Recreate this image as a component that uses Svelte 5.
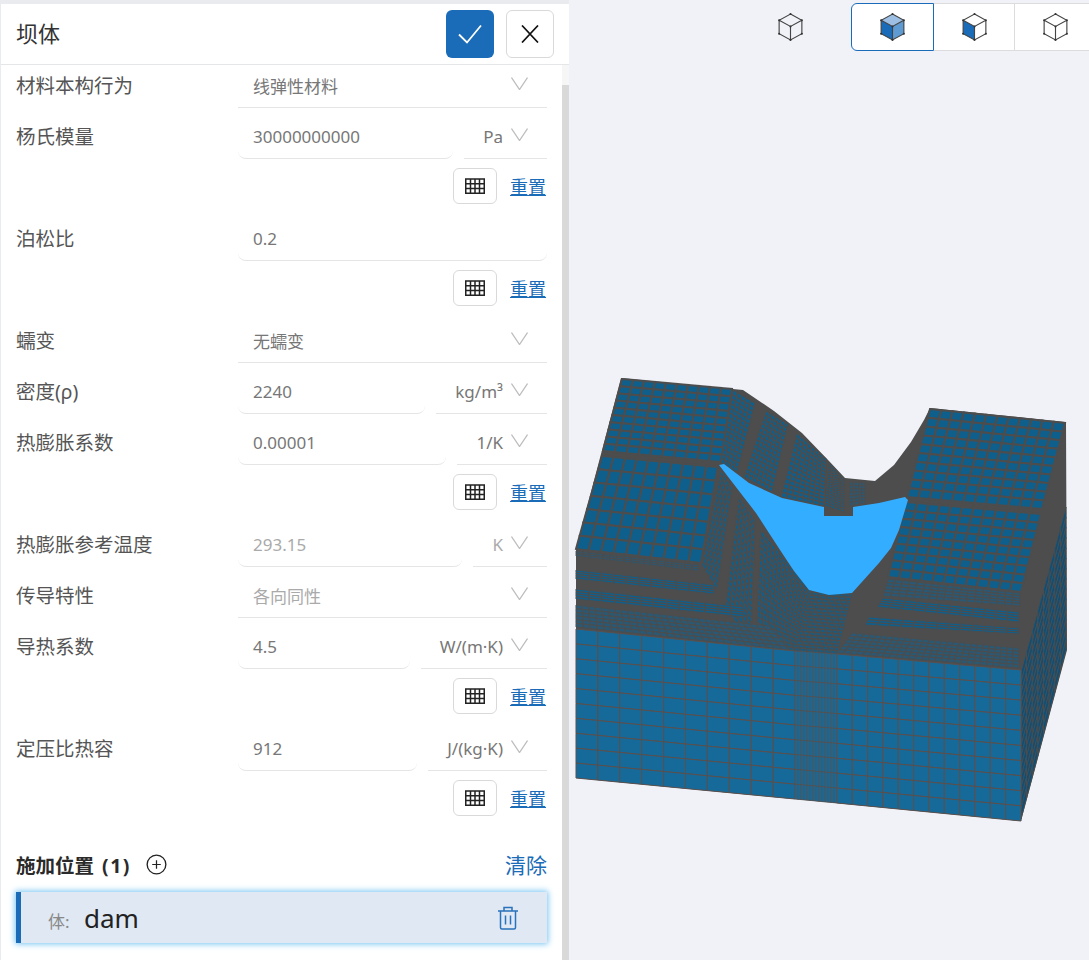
<script>
  const rows = [
    { label: '材料本构行为', value: '线弹性材料', select: true },
    { label: '杨氏模量', value: '30000000000', unit: 'Pa', tools: true },
    { label: '泊松比', value: '0.2', tools: true },
    { label: '蠕变', value: '无蠕变', select: true },
    { label: '密度(ρ)', value: '2240', unit: 'kg/m³' },
    { label: '热膨胀系数', value: '0.00001', unit: '1/K', tools: true },
    { label: '热膨胀参考温度', value: '293.15', unit: 'K', disabled: true },
    { label: '传导特性', value: '各向同性', select: true, disabled: true },
    { label: '导热系数', value: '4.5', unit: 'W/(m·K)', tools: true },
    { label: '定压比热容', value: '912', unit: 'J/(kg·K)', tools: true }
  ];

  const cubes = [
    { top: '#9dbfe3', left: '#1a6bb8', right: '#5f9bd3', selected: true },
    { top: '#fff', left: '#1a6bb8', right: '#fff' },
    { top: '#fff', left: '#fff', right: '#fff' }
  ];

  // bilinear point on a quad given as [top-left, top-right, bottom-right, bottom-left]
  function at(q, u, v) {
    const tx = q[0][0] + (q[1][0] - q[0][0]) * u;
    const ty = q[0][1] + (q[1][1] - q[0][1]) * u;
    const bx = q[3][0] + (q[2][0] - q[3][0]) * u;
    const by = q[3][1] + (q[2][1] - q[3][1]) * u;
    return [+(tx + (bx - tx) * v).toFixed(1), +(ty + (by - ty) * v).toFixed(1)];
  }

  function grid(q, nu, nv, fill, line, w) {
    const cells = [];
    for (let i = 0; i < nu; i++) {
      for (let j = 0; j < nv; j++) {
        const pts = [at(q, i / nu, j / nv), at(q, (i + 1) / nu, j / nv), at(q, (i + 1) / nu, (j + 1) / nv), at(q, i / nu, (j + 1) / nv)];
        cells.push(pts.join(' '));
      }
    }
    return { cells, fill, line, w };
  }

  const top = '#0f5f8c';
  const dim = '#2b5873';
  const gray = '#4d4d4d';
  const front = '#166a9a';
  const seam = '#5a504e';

  const meshes = [
    // top surfaces
    grid([[623, 379], [733, 389], [722, 462], [604, 451]], 10, 10, top, gray, 2),
    grid([[603, 456], [719, 467], [702, 563], [577, 549]], 10, 7, top, gray, 2),
    grid([[931, 409], [1066, 423], [1043, 509], [908, 497]], 12, 10, top, gray, 2),
    grid([[907, 502], [1042, 514], [1022, 592], [889, 577]], 12, 9, top, gray, 2),
    // abutment strips above the upstream face
    grid([[734, 390], [756, 403], [738, 472], [722, 463]], 5, 16, top, gray, 1.2),
    grid([[767, 411], [789, 424], [773, 492], [745, 477]], 7, 16, top, gray, 1.3),
    grid([[798, 433], [827, 459], [825, 506], [782, 497]], 8, 14, top, gray, 1.3),
    grid([[830, 463], [845, 479], [845, 512], [826, 506]], 6, 16, top, gray, 1.1),
    grid([[851, 482], [866, 483], [866, 503], [850, 506]], 5, 7, dim, gray, 1),
    // gully below the upstream face
    grid([[722, 470], [733, 488], [718, 590], [703, 565]], 4, 22, top, gray, 1.3),
    grid([[740, 497], [756, 520], [752, 640], [726, 610]], 6, 22, top, gray, 1.4),
    grid([[762, 530], [812, 592], [796, 651], [757, 646]], 14, 20, top, gray, 1.3),
    grid([[812, 592], [853, 594], [838, 654], [796, 651]], 14, 18, top, gray, 1.2),
    // slopes above the front face
    grid([[577, 551], [700, 565], [700, 571], [577, 556]], 18, 3, dim, gray, 0.9),
    grid([[577, 570], [715, 585], [715, 594], [577, 579]], 11, 4, top, gray, 1),
    grid([[577, 589], [745, 607], [745, 617], [577, 599]], 13, 4, top, gray, 1),
    grid([[577, 605], [770, 626], [790, 650], [577, 627]], 30, 6, dim, gray, 1),
    grid([[889, 579], [1021, 593], [1021, 606], [884, 596]], 18, 5, dim, gray, 1),
    grid([[884, 598], [1020, 612], [1020, 622], [878, 607]], 12, 4, top, gray, 1),
    grid([[870, 617], [1020, 628], [1020, 634], [866, 625]], 13, 3, top, gray, 1),
    grid([[853, 633], [1020, 648], [1020, 668], [838, 653]], 28, 6, dim, gray, 1),
    // right side
    grid([[1022, 672], [1067, 507], [1067, 650], [1022, 819]], 8, 14, '#0c4f78', gray, 0.9),
    // front
    grid([[577, 629], [796, 651], [796, 799], [577, 778]], 10, 10, front, seam, 1),
    grid([[796, 651], [838, 654], [838, 803], [796, 799]], 14, 10, front, seam, 0.7),
    grid([[838, 654], [1022, 670], [1022, 821], [838, 803]], 12, 10, front, seam, 1)
  ];
</script>

{#snippet cube(c)}
  <svg class="cube" viewBox="0 0 26 30" width="27" height="31">
    <path d="M13 2 24 8 13 14 2 8Z" fill={c.top} />
    <path d="M2 8 13 14V27L2 21Z" fill={c.left} />
    <path d="M24 8 13 14V27L24 21Z" fill={c.right} />
    <path d="M13 2 24 8V21L13 27 2 21V8ZM2 8 13 14 24 8M13 14V27" fill="none" stroke="#444" stroke-width="1.1" />
    {#each [[13, 2], [24, 8], [24, 21], [13, 27], [2, 21], [2, 8], [13, 14]] as d}
      <circle cx={d[0]} cy={d[1]} r="1" fill="#333" />
    {/each}
  </svg>
{/snippet}

{#snippet chevron()}
  <svg class="chevron" viewBox="0 0 17 13" width="17" height="13">
    <path d="M.5.5 8.5 12.5 16.5.5" fill="none" stroke="#bdbdbd" stroke-width="1.3" />
  </svg>
{/snippet}

<div class="page">
  <aside class="panel">
    <header class="head">
      <h1>坝体</h1>
      <button class="confirm" aria-label="确定">
        <svg viewBox="0 0 24 20" width="24" height="20"><path d="M1 10.5 9 18.5 23 1.5" fill="none" stroke="#fff" stroke-width="1.8" /></svg>
      </button>
      <button class="close" aria-label="关闭">
        <svg viewBox="0 0 18 18" width="18" height="18"><path d="M1 .5 17 17.5M17 .5 1 17.5" fill="none" stroke="#111" stroke-width="1.7" /></svg>
      </button>
    </header>

    <div class="body">
      <div class="form">
        {#each rows as r}
          <div class="row" class:disabled={r.disabled}>
            <span class="label">{r.label}</span>
            <div class="fields">
              {#if r.select}
                <div class="select">
                  <span>{r.value}</span>
                  {@render chevron()}
                </div>
              {:else}
                <div class="input">{r.value}</div>
                {#if r.unit}
                  <div class="unit">
                    <span>{r.unit}</span>
                    {@render chevron()}
                  </div>
                {/if}
              {/if}
            </div>
          </div>
          {#if r.tools}
            <div class="tools">
              <button class="table" aria-label="表格">
                <svg viewBox="0 0 20 16" width="20" height="16">
                  <path d="M.75 1H19.250V15.250H.75ZM.75 5.750H19.250M.75 10.500H19.250M5.500 1V15.250M10 1V15.250M14.500 1V15.250" fill="none" stroke="#222" stroke-width="1.5" />
                </svg>
              </button>
              <span class="reset">重置</span>
            </div>
          {/if}
        {/each}

        <div class="apply">
          <strong>施加位置 <span>(1)</span></strong>
          <svg viewBox="0 0 22 22" width="21" height="21">
            <circle cx="11" cy="11" r="9.8" fill="none" stroke="#222" stroke-width="1.4" />
            <path d="M6.5 11H15.5M11 6.5V15.5" stroke="#222" stroke-width="1.3" />
          </svg>
          <span class="clear">清除</span>
        </div>
        <div class="item">
          <span class="kind">体:</span>
          <span class="name">dam</span>
          <svg viewBox="0 0 22 24" width="22" height="24">
            <path d="M1 5H21M7 5V1.5H15V5M3.5 5V21.5A1.5 1.5 0 0 0 5 23H17A1.5 1.5 0 0 0 18.500 21.500V5M8.500 9.500V18.500M13.500 9.500V18.500" fill="none" stroke="#2a72bb" stroke-width="1.5" />
          </svg>
        </div>
      </div>
      <div class="track"><div class="thumb"></div></div>
    </div>
  </aside>

  <main class="viewport">
    <svg class="model" viewBox="570 0 519 960" width="519" height="960">
      <polygon fill={gray} points="622,378 744,390 775,411 803,433 830,461 846,478 876,481 895,465 912,442 925,420 931,408 1067,422 1068,650 1022,821 577,778 577,549" />
      {#each meshes as m}
        <g fill={m.fill} stroke={m.line} stroke-width={m.w}>
          {#each m.cells as c}
            <polygon points={c} />
          {/each}
        </g>
      {/each}
      <polygon fill="#33adff" points="720,465 725,464 750,483 783,498 825,507 825,516 854,516 854,507 880,503 906,497 909,500 900,530 892,548 880,563 853,593 830,595 810,590 795,571 783,553 757,513" />
    </svg>

    <div class="views">
      <span class="solo">{@render cube({ top: 'none', left: 'none', right: 'none' })}</span>
      <div class="segments">
        {#each cubes as c}
          <button class="segment" class:selected={c.selected} aria-label="视图">{@render cube(c)}</button>
        {/each}
      </div>
    </div>
  </main>
</div>

<style>
  :global(body) {
    background: #f0f2f7;
  }

  .page {
    display: flex;
    width: 1089px;
    height: 960px;
    overflow: hidden;
    font-family: "Noto Sans", "Noto Sans CJK SC", sans-serif;
    background: #f0f2f7;
  }

  .panel {
    display: flex;
    flex-direction: column;
    flex: none;
    box-sizing: border-box;
    width: 569px;
    height: 960px;
    border-top: 4px solid #e9ebee;
    border-left: 1px solid #e9ebee;
    background: #fff;
  }

  .head {
    display: flex;
    flex: none;
    align-items: center;
    gap: 12px;
    height: 60px;
    padding: 0 15px;
    border-bottom: 1px solid #e4e6e8;
  }

  .head h1 {
    flex: 1;
    margin: 0;
    padding-bottom: 4px;
    font-size: 22px;
    font-weight: 400;
    color: #333;
  }

  .head button {
    display: flex;
    align-items: center;
    justify-content: center;
    width: 48px;
    height: 48px;
    padding: 0;
    border-radius: 6px;
  }

  .confirm {
    border: 0;
    background: #1a6bb8;
  }

  .close {
    border: 1px solid #d9d9d9;
    background: #fff;
  }

  .body {
    display: flex;
    flex: 1;
    min-height: 0;
    overflow: hidden;
  }

  .form {
    flex: 1;
    min-width: 0;
    margin-top: -8px;
    padding: 0 15px;
  }

  .track {
    flex: none;
    width: 7px;
    background: #f6f6f6;
  }

  .thumb {
    height: 100%;
    margin-top: 20px;
    background: #d9d9d9;
  }

  .row {
    display: flex;
    align-items: flex-end;
    height: 51px;
  }

  .label {
    flex: none;
    width: 222px;
    padding-bottom: 12px;
    font-size: 19.5px;
    line-height: 21px;
    color: #555;
  }

  .fields {
    display: flex;
    flex: 1;
    gap: 11px;
    min-width: 0;
    height: 42px;
  }

  .input,
  .select,
  .unit {
    display: flex;
    align-items: center;
    box-sizing: border-box;
    height: 42px;
    padding-bottom: 2px;
    font-size: 17px;
    color: #777;
    border-bottom: 1px solid #e5e5e5;
  }

  .input {
    flex: 1;
    min-width: 0;
    padding-left: 15px;
    border-radius: 0 0 8px 8px;
  }

  .select {
    flex: 1;
    justify-content: space-between;
    padding: 0 19px 2px 15px;
  }

  .unit {
    flex: none;
    gap: 8px;
    padding: 0 19px 2px 19px;
  }

  .chevron {
    flex: none;
    margin-top: -5px;
  }

  .row.disabled .input,
  .row.disabled .select,
  .row.disabled .unit {
    color: #aaa;
  }

  .tools {
    display: flex;
    align-items: center;
    justify-content: flex-end;
    gap: 13px;
    box-sizing: border-box;
    height: 51px;
    padding: 3px 1px 0 0;
  }

  .table {
    display: flex;
    align-items: center;
    justify-content: center;
    width: 44px;
    height: 36px;
    padding: 0;
    border: 1px solid #d9d9d9;
    border-radius: 6px;
    background: #fff;
  }

  .reset {
    margin-top: 2px;
    font-size: 18px;
    line-height: 24px;
    color: #1a6bb8;
    text-decoration: underline;
  }

  .apply {
    display: flex;
    align-items: center;
    gap: 15px;
    height: 28px;
    margin-top: 28px;
  }

  .apply strong {
    font-size: 19.5px;
    font-weight: 700;
    color: #2a2a2a;
    word-spacing: 3px;
  }

  .apply strong span {
    letter-spacing: 1.5px;
  }

  .clear {
    margin-left: auto;
    font-size: 21px;
    color: #1a6bb8;
  }

  .item {
    display: flex;
    align-items: center;
    box-sizing: border-box;
    height: 51px;
    margin-top: 14px;
    padding: 0 28px 0 27px;
    border-left: 5px solid #1a6bb8;
    background: #dfe8f3;
    box-shadow: 0 0 6px 1px #74c3f2;
  }

  .kind {
    width: 36px;
    padding-top: 5px;
    font-size: 17px;
    color: #888;
  }

  .name {
    flex: 1;
    font-size: 26px;
    color: #222;
  }

  .viewport {
    position: relative;
    flex: 1;
    min-width: 0;
  }

  .model {
    position: absolute;
    top: 0;
    left: 0;
  }

  .views {
    position: absolute;
    top: 3px;
    left: 208px;
    display: flex;
    align-items: flex-start;
  }

  .solo {
    display: flex;
    align-items: center;
    height: 48px;
    margin-right: 46px;
  }

  .segments {
    display: flex;
    height: 48px;
    margin-left: 1px;
  }

  .segment {
    display: flex;
    align-items: center;
    justify-content: center;
    box-sizing: border-box;
    width: 81px;
    height: 48px;
    padding: 0;
    border: 1px solid #dcdcdc;
    border-left: 0;
    background: #fff;
  }

  .segment.selected {
    width: 83px;
    border: 1px solid #1a6bb8;
    border-radius: 6px 0 0 6px;
  }
</style>
